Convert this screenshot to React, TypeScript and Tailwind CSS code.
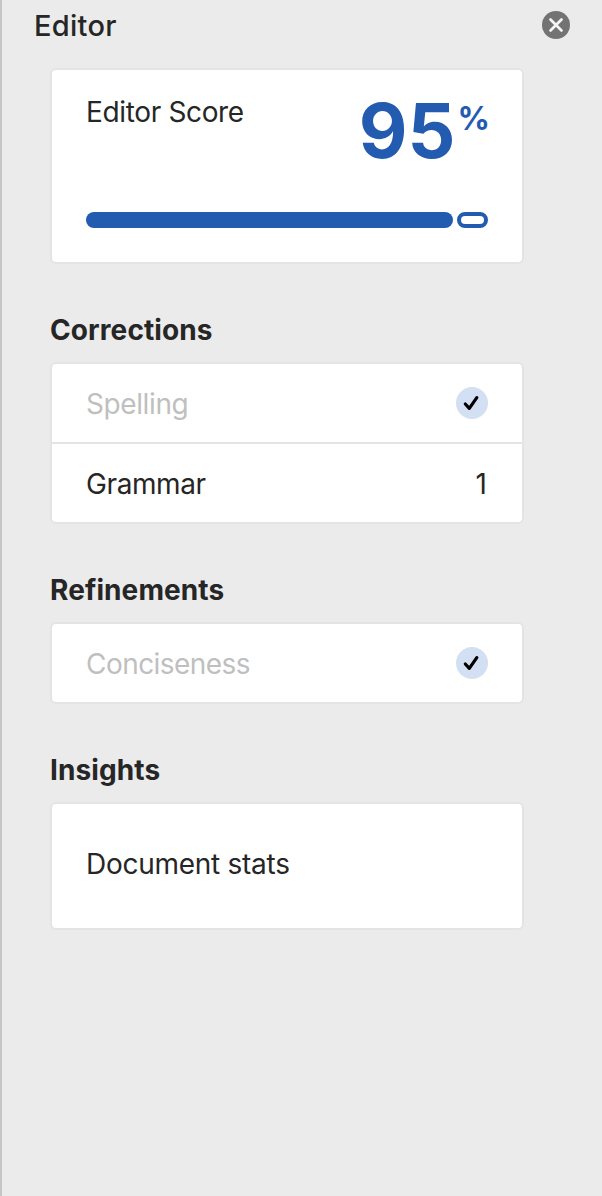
import type { ReactNode } from "react"

function CheckBadge() {
  return (
    <svg width="32" height="32" viewBox="0 0 32 32" fill="none">
      <circle cx="16" cy="16" r="16" fill="#d3dff2" />
      <path d="M9.3 17L13.3 21.4L20.8 10.6" stroke="#000" strokeWidth="3.2" strokeLinecap="round" strokeLinejoin="round" />
    </svg>
  )
}

function Card({ children }: { children: ReactNode }) {
  return <div className="w-[474px] rounded-[6px] border-2 border-[#e4e4e4] bg-white">{children}</div>
}

function Section({ title, children }: { title: string; children: ReactNode }) {
  return (
    <section>
      <h2 className="flex h-[98px] items-end pb-[14px] text-[28px] leading-9 font-bold tracking-[0.1px]">{title}</h2>
      <Card>{children}</Card>
    </section>
  )
}

export default function App() {
  return (
    <div className="h-[1196px] w-[602px] border-l-2 border-[#c6c6c6] bg-[#ebebeb] font-['Inter',sans-serif] text-[#262626]">
      <header className="flex h-[68px] items-start justify-between pr-8 pl-8">
        <h1 className="pt-[8px] text-[29px] leading-9 font-medium tracking-[0.3px]">Editor</h1>
        <button type="button" aria-label="Close" className="pt-[11px]">
          <svg width="28" height="28" viewBox="0 0 28 28" fill="none">
            <circle cx="14" cy="14" r="14" fill="#737373" />
            <path d="M8.5 8.5L19.5 19.5M19.5 8.5L8.5 19.5" stroke="#f4f4f4" strokeWidth="2.7" strokeLinecap="round" />
          </svg>
        </button>
      </header>

      <main className="pl-12">
        <Card>
          <div className="h-[192px] px-[34px]">
            <div className="flex h-[142px] items-start justify-between">
              <span className="pt-[24px] text-[28px] leading-9 tracking-[-0.35px]">Editor Score</span>
              <div className="-mr-0.5 flex items-start font-bold text-[#235bb0]">
                <span className="pt-[16px] text-[75px] leading-[90px]">95</span>
                <span className="pt-[31px] pl-[2px] text-[32px] leading-9">%</span>
              </div>
            </div>
            <div className="flex gap-1">
              <div className="h-4 w-[367px] rounded-full bg-[#235bb0]" />
              <div className="h-4 w-[31px] rounded-full border-4 border-[#235bb0]" />
            </div>
          </div>
        </Card>

        <Section title="Corrections">
          <div className="flex h-[80px] items-center justify-between border-b-2 border-[#e4e4e4] px-[34px]">
            <span className="pt-[2px] text-[28px] leading-9 tracking-[-0.4px] text-[#bfbfbf]">Spelling</span>
            <CheckBadge />
          </div>
          <div className="flex h-[78px] items-center justify-between px-[34px]">
            <span className="pt-[2px] text-[28px] leading-9 tracking-[-0.4px]">Grammar</span>
            <span className="pt-[2px] pr-px text-[28px] leading-9">1</span>
          </div>
        </Section>

        <Section title="Refinements">
          <div className="flex h-[78px] items-center justify-between px-[34px]">
            <span className="pt-[2px] text-[28px] leading-9 tracking-[-0.55px] text-[#bfbfbf]">Conciseness</span>
            <CheckBadge />
          </div>
        </Section>

        <Section title="Insights">
          <div className="flex h-[124px] items-center px-[34px] pb-[4px]">
            <span className="text-[28px] leading-9 tracking-[-0.27px]">Document stats</span>
          </div>
        </Section>
      </main>
    </div>
  )
}
